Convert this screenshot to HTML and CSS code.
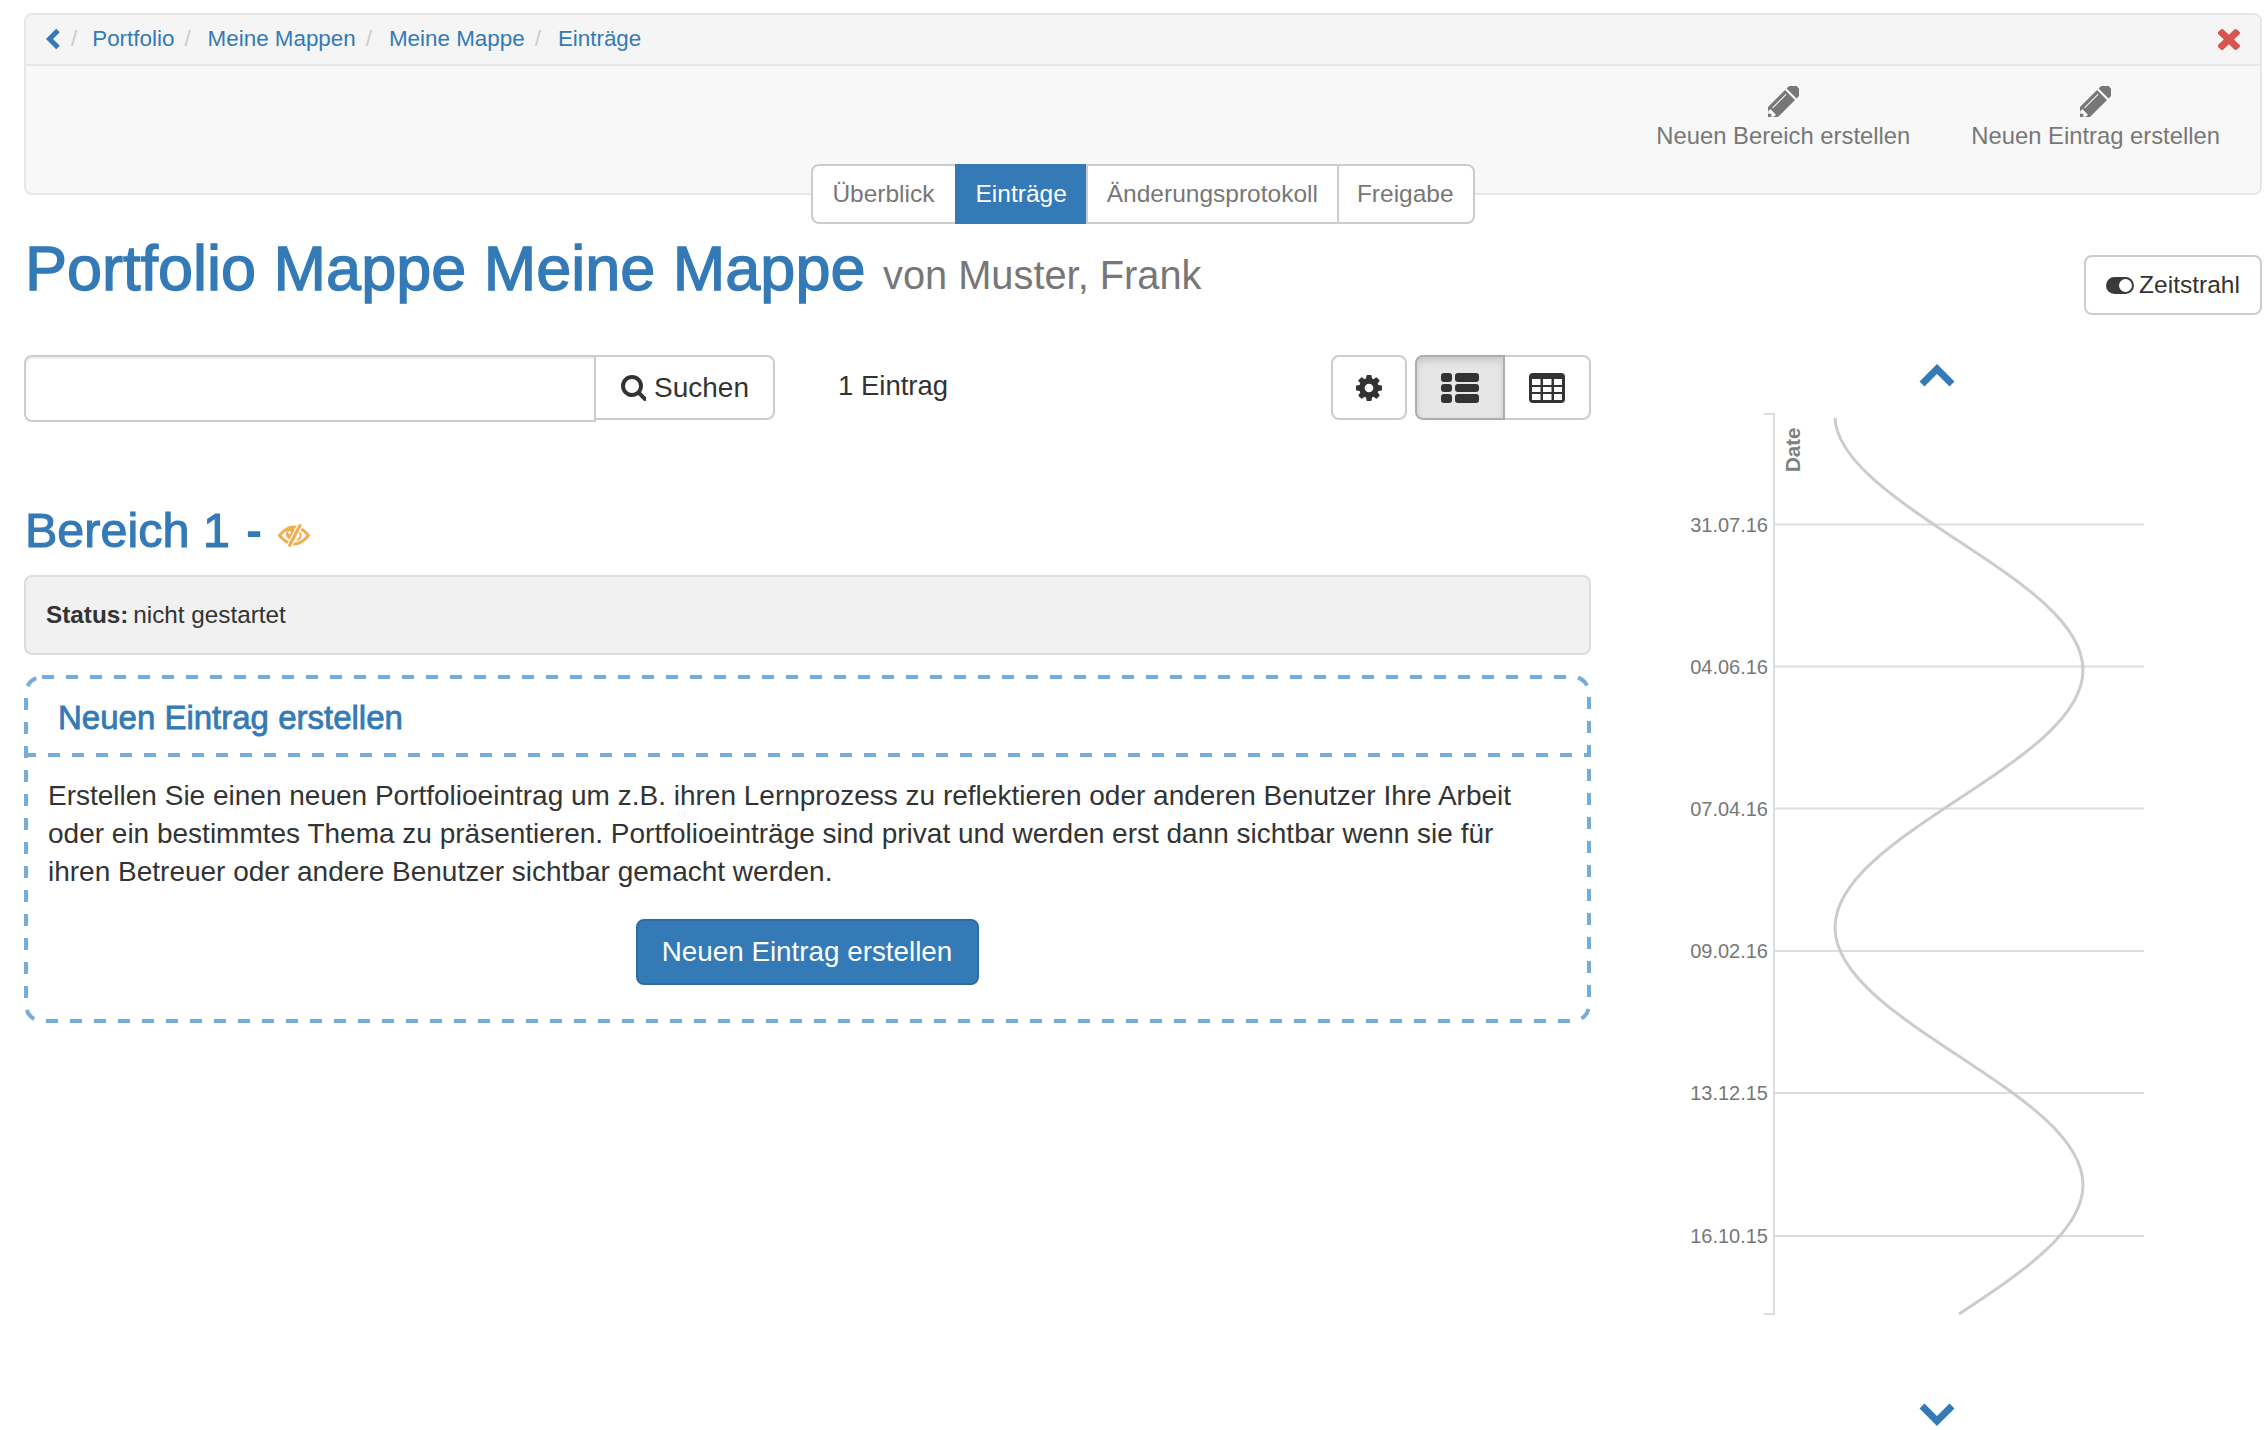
FILE: index.html
```html
<!DOCTYPE html>
<html lang="de">
<head>
    <meta charset="UTF-8">
    <title>Portfolio Mappe Meine Mappe</title>
    <link rel="stylesheet" href="styles.css">
</head>
<body>
    <div class="page">
        <div class="toolbar">
            <div class="crumbs">
                <a class="crumb-back" href="#"><svg width="16" height="22" viewBox="0 0 16 22"><polyline points="13,2.5 4.5,11 13,19.500" class="chev-line"/></svg></a>
                <span class="crumb-sep first">/</span>
                <a href="#">Portfolio</a>
                <span class="crumb-sep">/</span>
                <a href="#">Meine Mappen</a>
                <span class="crumb-sep">/</span>
                <a href="#">Meine Mappe</a>
                <span class="crumb-sep">/</span>
                <a href="#">Einträge</a>
                <a class="crumb-close" href="#"><svg width="22" height="23" viewBox="314 256 1176 1296" preserveAspectRatio="none"><path d="M1490 1322q0 40-28 68l-136 136q-28 28-68 28t-68-28l-294-294-294 294q-28 28-68 28t-68-28l-136-136q-28-28-28-68t28-68l294-294-294-294q-28-28-28-68t28-68l136-136q28-28 68-28t68 28l294 294 294-294q28-28 68-28t68 28l136 136q28 28 28 68t-28 68l-294 294 294 294q28 28 28 68z"/></svg></a>
            </div>
            <div class="actions">
                <a class="action" href="#">
                    <svg width="31" height="31" viewBox="250 250 1292 1292"><path d="M491 1536l91-91-235-235-91 91v107h128v128h107zm523-928q0-22-22-22-10 0-17 7l-542 542q-7 7-7 17 0 22 22 22 10 0 17-7l542-542q7-7 7-17zm-54-192l416 416-832 832h-416v-416zm683 96q0 53-37 90l-166 166-416-416 166-165q36-38 90-38 53 0 91 38l235 234q37 39 37 91z"/></svg>
                    <span>Neuen Bereich erstellen</span>
                </a>
                <a class="action" href="#">
                    <svg width="31" height="31" viewBox="250 250 1292 1292"><path d="M491 1536l91-91-235-235-91 91v107h128v128h107zm523-928q0-22-22-22-10 0-17 7l-542 542q-7 7-7 17 0 22 22 22 10 0 17-7l542-542q7-7 7-17zm-54-192l416 416-832 832h-416v-416zm683 96q0 53-37 90l-166 166-416-416 166-165q36-38 90-38 53 0 91 38l235 234q37 39 37 91z"/></svg>
                    <span>Neuen Eintrag erstellen</span>
                </a>
            </div>
            <div class="tabs">
                <a class="tab" href="#">Überblick</a>
                <a class="tab active" href="#">Einträge</a>
                <a class="tab" href="#">Änderungsprotokoll</a>
                <a class="tab" href="#">Freigabe</a>
            </div>
        </div>

        <div class="title-row">
            <h1>Portfolio Mappe Meine Mappe <small>von Muster, Frank</small></h1>
            <button class="btn timeline-btn" type="button">
                <svg width="28" height="17" viewBox="0 0 28 17"><rect x="0" y="0" width="28" height="17" rx="8.500" fill="#3a3a3a"/><circle cx="19.500" cy="8.500" r="6.500" fill="#fff"/></svg>
                Zeitstrahl
            </button>
        </div>

        <div class="columns">
            <div class="left">
                <div class="search-row">
                    <input class="search-input" type="text">
                    <button class="btn search-btn" type="button">
                        <svg width="26" height="26" viewBox="0 0 1664 1664"><path transform="translate(0 -128)" d="M1216 832q0-185-131.500-316.500t-316.500-131.500-316.500 131.500-131.500 316.500 131.500 316.500 316.500 131.500 316.500-131.500 131.500-316.500zm512 832q0 52-38 90t-90 38q-54 0-90-38l-343-342q-179 124-399 124-143 0-273.500-55.500t-225-150-150-225-55.500-273.500 55.500-273.500 150-225 225-150 273.500-55.500 273.500 55.500 225 150 150 225 55.500 273.500q0 220-124 399l343 343q37 37 37 90z"/></svg>
                        Suchen
                    </button>
                    <span class="count">1 Eintrag</span>
                    <div class="tools">
                        <button class="btn tool-btn" type="button">
                            <svg width="26" height="26" viewBox="128 128 1536 1536"><path d="M1152 896q0-106-75-181t-181-75-181 75-75 181 75 181 181 75 181-75 75-181zm512-109v222q0 12-8 23t-20 13l-185 28q-19 54-39 91 35 50 107 138 10 12 10 25t-9 23q-27 37-99 108t-94 71q-12 0-26-9l-138-108q-44 23-91 38-16 136-29 186-7 28-36 28h-222q-14 0-24.500-8.500t-11.500-21.500l-28-184q-49-16-90-37l-141 107q-10 9-25 9-14 0-25-11-126-114-165-168-7-10-7-23 0-12 8-23 15-21 51-66.500t54-70.500q-27-50-41-99l-183-27q-13-2-21-12.500t-8-23.500v-222q0-12 8-23t19-13l186-28q14-46 39-92-40-57-107-138-10-12-10-24 0-10 9-23 26-36 98.500-107.500t94.500-71.500q13 0 26 10l138 107q44-23 91-38 16-136 29-186 7-28 36-28h222q14 0 24.500 8.500t11.500 21.500l28 184q49 16 90 37l142-107q9-9 24-9 13 0 25 10 129 119 165 170 7 8 7 22 0 12-8 23-15 21-51 66.500t-54 70.500q26 50 41 98l183 28q13 2 21 12.500t8 23.500z"/></svg>
                        </button>
                        <div class="btn-group">
                            <button class="btn view-btn pressed" type="button">
                                <svg width="38" height="30" viewBox="0 0 38 30">
                                    <rect x="0" y="0" width="11" height="9" rx="3"/><rect x="14" y="0" width="24" height="9" rx="3"/>
                                    <rect x="0" y="11" width="11" height="8" rx="3"/><rect x="14" y="11" width="24" height="8" rx="3"/>
                                    <rect x="0" y="21" width="11" height="9" rx="3"/><rect x="14" y="21" width="24" height="9" rx="3"/>
                                </svg>
                            </button>
                            <button class="btn view-btn" type="button">
                                <svg width="36" height="30" viewBox="0 0 36 30">
                                    <rect width="36" height="30" rx="4" fill="#333"/>
                                    <g fill="#fff">
                                        <rect x="3" y="6" width="8.500" height="6"/><rect x="14" y="6" width="8.500" height="6"/><rect x="25" y="6" width="8" height="6"/>
                                        <rect x="3" y="14" width="8.500" height="5"/><rect x="14" y="14" width="8.500" height="5"/><rect x="25" y="14" width="8" height="5"/>
                                        <rect x="3" y="21" width="8.500" height="6"/><rect x="14" y="21" width="8.500" height="6"/><rect x="25" y="21" width="8" height="6"/>
                                    </g>
                                </svg>
                            </button>
                        </div>
                    </div>
                </div>

                <h2 class="section-title">Bereich 1 <span class="dash">-</span>
                    <svg class="eye-off" width="32" height="24" viewBox="0 0 32 24">
                        <path d="M1.500 11.500 C6 6 11 3 16 3 C21 3 26 6 30.500 11.500 C26 17 21 20 16 20 C11 20 6 17 1.500 11.500 Z" fill="none" stroke="#f0ad4e" stroke-width="2.800"/>
                        <circle cx="14" cy="10" r="6" fill="#f0ad4e"/>
                        <circle cx="11.500" cy="8.500" r="1.500" fill="#fff"/>
                        <path d="M21 8 C24 11 23 14 19 16.500" fill="none" stroke="#f0ad4e" stroke-width="2"/>
                        <path d="M22.500 0.500 L11 22.500" stroke="#fff" stroke-width="5.500" fill="none"/>
                        <path d="M22.500 0.500 L11 22.500" stroke="#f0ad4e" stroke-width="3.200" fill="none"/>
                    </svg>
                </h2>

                <div class="status-well"><strong>Status:</strong> nicht gestartet</div>

                <div class="create-box">
                    <svg class="dash-frame"><rect class="dash-rect" rx="16" ry="16"/></svg>
                    <h3 class="create-title">Neuen Eintrag erstellen</h3>
                    <div class="create-body">
                        <p>Erstellen Sie einen neuen Portfolioeintrag um z.B. ihren Lernprozess zu reflektieren oder anderen Benutzer Ihre Arbeit oder ein bestimmtes Thema zu präsentieren. Portfolioeinträge sind privat und werden erst dann sichtbar wenn sie für ihren Betreuer oder andere Benutzer sichtbar gemacht werden.</p>
                        <div class="create-action"><button class="btn-primary" type="button">Neuen Eintrag erstellen</button></div>
                    </div>
                </div>
            </div>

            <div class="right">
                <svg class="chev" width="36" height="24" viewBox="0 0 36 24"><polyline points="3,20 18,5 33,20" class="chev-line wide"/></svg>
                <svg class="chart" width="672" height="906" viewBox="1591 412 672 906">
                    <g class="grid">
                        <line x1="1764" y1="414" x2="1775" y2="414"/>
                        <line x1="1764" y1="1314" x2="1775" y2="1314"/>
                        <line x1="1774" y1="413" x2="1774" y2="1315"/>
                        <line x1="1774" y1="524.500" x2="2144" y2="524.500"/>
                        <line x1="1774" y1="666.500" x2="2144" y2="666.500"/>
                        <line x1="1774" y1="808.500" x2="2144" y2="808.500"/>
                        <line x1="1774" y1="951" x2="2144" y2="951"/>
                        <line x1="1774" y1="1093" x2="2144" y2="1093"/>
                        <line x1="1774" y1="1236" x2="2144" y2="1236"/>
                    </g>
                    <g class="ticks">
                        <text x="1768" y="531.500">31.07.16</text>
                        <text x="1768" y="673.500">04.06.16</text>
                        <text x="1768" y="815.500">07.04.16</text>
                        <text x="1768" y="958">09.02.16</text>
                        <text x="1768" y="1100">13.12.15</text>
                        <text x="1768" y="1243">16.10.15</text>
                    </g>
                    <text class="axis-name" transform="translate(1800 472) rotate(-90)">Date</text>
                    <path class="curve" d="M1835 418 C1837 460 1895.500 499.250 1959 541.250 C2022.500 583.250 2083 623.450 2083 670 C2083 716.550 2022.500 756.750 1959 798.750 C1895.500 840.750 1835 880.950 1835 927.500 C1835 974.050 1895.500 1014.250 1959 1056.250 C2022.500 1098.250 2083 1138.450 2083 1185 C2083 1231.550 2022.500 1272 1959 1314"/>
                </svg>
                <svg class="chev down" width="36" height="24" viewBox="0 0 36 24"><polyline points="3,4 18,19 33,4" class="chev-line wide"/></svg>
            </div>
        </div>
    </div>
</body>
</html>
```

FILE: styles.css
```css
body {
    font-family: "Liberation Sans", Arial, sans-serif;
    font-size: 28px;
    color: #333;
    background-color: #fff;
    margin: 0;
    padding: 0;
}
a {
    color: #337ab7;
    text-decoration: none;
}
.page {
    width: 2238px;
    padding: 13px 4px 0 24px;
}

/* toolbar */
.toolbar {
    border: 2px solid #e7e7e7;
    border-radius: 8px;
    background-color: #f8f8f8;
    height: 178px;
    display: flex;
    flex-direction: column;
}
.crumbs {
    display: flex;
    align-items: center;
    height: 47px;
    padding: 0 20px 2px 19px;
    background-color: #f5f5f5;
    border-bottom: 2px solid #e7e7e7;
    border-radius: 6px 6px 0 0;
    font-size: 22.400px;
    flex: none;
}
.crumb-back {
    display: flex;
    margin-right: 10px;
}
.crumb-sep {
    color: #ccc;
    margin: 0 17px 0 10px;
}
.crumb-sep.first {
    margin: 0 15px 0 0;
}
.crumb-close {
    margin-left: auto;
    display: flex;
}
.crumb-close path {
    fill: #d9534f;
}
.chev-line {
    fill: none;
    stroke: #337ab7;
    stroke-width: 5;
}
.chev-line.wide {
    stroke-width: 7;
}
.actions {
    display: flex;
    justify-content: flex-end;
    gap: 61px;
    height: 98px;
    padding: 20px 40px 0 0;
    box-sizing: border-box;
    flex: none;
}
.action {
    display: flex;
    flex-direction: column;
    align-items: center;
    color: #777;
    font-size: 23.800px;
}
.action svg {
    display: block;
    margin-bottom: 5px;
}
.action path {
    fill: #777;
}
.tabs {
    display: flex;
    justify-content: center;
    height: 60px;
    flex: none;
}
.tab {
    display: flex;
    align-items: center;
    padding: 0 19px;
    font-size: 24.500px;
    color: #777;
    background-color: #fff;
    border: 2px solid #ccc;
    margin-left: -2px;
}
.tab:first-child {
    border-radius: 8px 0 0 8px;
    margin-left: 0;
    padding-right: 20px;
}
.tab:last-child {
    border-radius: 0 8px 8px 0;
    padding-left: 18px;
}
.tab.active {
    color: #fff;
    background-color: #337ab7;
    border-color: #337ab7;
}

/* title */
.title-row {
    display: flex;
    justify-content: space-between;
    align-items: flex-start;
    height: 160px;
}
h1 {
    margin: 40px 0 0 1px;
    font-size: 63px;
    font-weight: normal;
    line-height: 66px;
    color: #337ab7;
    -webkit-text-stroke: 1.400px #337ab7;
}
h1 small {
    font-size: 39.800px;
    color: #777;
    -webkit-text-stroke: 0;
    vertical-align: 1px;
}
.btn {
    font-family: inherit;
    color: #333;
    background-color: #fff;
    border: 2px solid #ccc;
    border-radius: 8px;
    display: flex;
    align-items: center;
    justify-content: center;
    padding: 0;
}
.timeline-btn {
    margin-top: 60px;
    width: 178px;
    height: 60px;
    font-size: 24.500px;
    gap: 5px;
}

/* left column */
.columns {
    display: grid;
    grid-template-columns: 1567px 1fr;
}
.search-row {
    display: flex;
    align-items: flex-start;
    height: 67px;
}
.search-input {
    width: 572px;
    height: 67px;
    box-sizing: border-box;
    border: 2px solid #ccc;
    border-radius: 8px 0 0 8px;
    box-shadow: inset 0 2px 2px rgba(0, 0, 0, 0.075);
    padding: 0;
    margin: 0;
}
.search-btn {
    width: 181px;
    height: 65px;
    margin-left: -2px;
    border-radius: 0 8px 8px 0;
    font-size: 28px;
    gap: 8px;
}
.search-btn path,
.tool-btn path {
    fill: #333;
}
.count {
    margin-left: 63px;
    font-size: 27.500px;
    line-height: 62px;
}
.tools {
    margin-left: auto;
    display: flex;
    gap: 8px;
}
.tool-btn {
    width: 76px;
    height: 65px;
}
.btn-group {
    display: flex;
}
.view-btn {
    height: 65px;
    width: 88px;
    border-radius: 0 8px 8px 0;
    margin-left: -2px;
}
.view-btn svg {
    fill: #333;
}
.view-btn.pressed {
    width: 90px;
    margin-left: 0;
    border-radius: 8px 0 0 8px;
    background-color: #e6e6e6;
    border-color: #adadad;
    box-shadow: inset 0 4px 7px rgba(0, 0, 0, 0.125);
    position: relative;
}
.section-title {
    margin: 82px 0 19px 1px;
    font-size: 48.500px;
    font-weight: normal;
    line-height: 52px;
    color: #337ab7;
    -webkit-text-stroke: 1.100px #337ab7;
    display: flex;
    align-items: baseline;
    gap: 16px;
}
.dash {
    font-weight: bold;
    -webkit-text-stroke: 0;
}
.eye-off {
    align-self: flex-end;
    margin: 0 0 8px 0;
}
.status-well {
    height: 80px;
    box-sizing: border-box;
    background-color: #f1f1f1;
    border: 2px solid #ddd;
    border-radius: 8px;
    padding: 0 20px;
    display: flex;
    align-items: center;
    gap: 0.2em;
    font-size: 24.300px;
}
.create-box {
    position: relative;
    margin-top: 20px;
    height: 348px;
}
.dash-frame {
    position: absolute;
    left: 0;
    top: 0;
    width: 100%;
    height: 100%;
    pointer-events: none;
}
.dash-rect {
    x: 2px;
    y: 2px;
    width: calc(100% - 4px);
    height: calc(100% - 4px);
    fill: none;
    stroke: #76acdc;
    stroke-width: 4;
    stroke-dasharray: 12 12;
}
.create-title {
    margin: 0;
    height: 82px;
    box-sizing: border-box;
    padding: 23px 0 0 34px;
    font-size: 33px;
    line-height: 40px;
    font-weight: normal;
    color: #337ab7;
    -webkit-text-stroke: 0.800px #337ab7;
    background: repeating-linear-gradient(90deg, #76acdc 0 12px, transparent 12px 24px) left bottom / 100% 4px no-repeat;
}
.create-body {
    padding: 20px 48px 0 24px;
}
.create-body p {
    margin: 0;
    line-height: 38px;
}
.create-action {
    display: flex;
    justify-content: center;
    margin: 28px 0 0 23px;
}
.btn-primary {
    font-family: inherit;
    font-size: 27.800px;
    color: #fff;
    background-color: #337ab7;
    border: 2px solid #2e6da4;
    border-radius: 8px;
    width: 343px;
    height: 66px;
    padding: 0;
}

/* timeline */
.right {
    display: flex;
    flex-direction: column;
}
.chev {
    display: block;
    margin: 9px 0 0 328px;
}
.chev.down {
    margin-top: 84px;
}
.chart {
    display: block;
    margin-top: 24px;
}
.grid line {
    stroke: #ddd;
    stroke-width: 2;
}
.ticks text {
    font-size: 20px;
    fill: #777;
    text-anchor: end;
}
.axis-name {
    font-size: 20.500px;
    font-weight: bold;
    fill: #808080;
}
.curve {
    fill: none;
    stroke: #ccc;
    stroke-width: 3;
}
```
